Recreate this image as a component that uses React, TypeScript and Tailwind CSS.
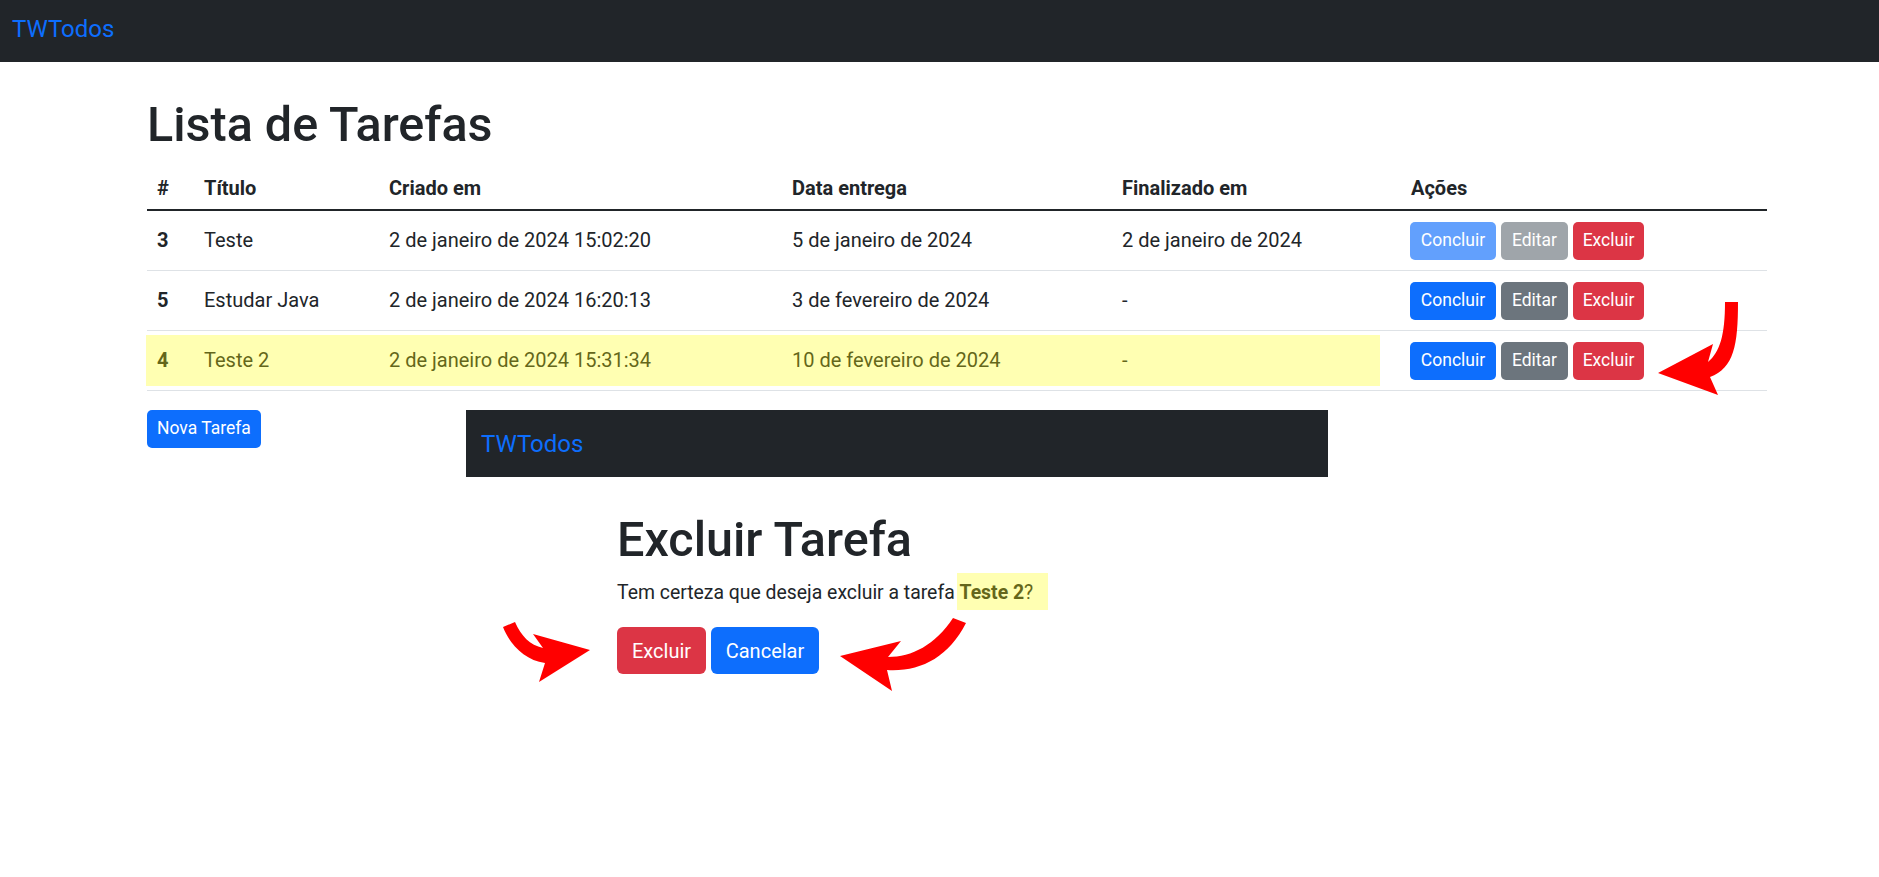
import React from "react";

type Row = {
  id: string;
  title: string;
  created: string;
  due: string;
  finished: string;
  done?: boolean;
  highlight?: boolean;
};

const rows: Row[] = [
  { id: "3", title: "Teste", created: "2 de janeiro de 2024 15:02:20", due: "5 de janeiro de 2024", finished: "2 de janeiro de 2024", done: true },
  { id: "5", title: "Estudar Java", created: "2 de janeiro de 2024 16:20:13", due: "3 de fevereiro de 2024", finished: "-" },
  { id: "4", title: "Teste 2", created: "2 de janeiro de 2024 15:31:34", due: "10 de fevereiro de 2024", finished: "-", highlight: true },
];

const cols = "grid grid-cols-[47px_185px_403px_330px_289px_366px]";

function SmallBtn({ label, color, width }: { label: string; color: string; width: string }) {
  return (
    <button className={`h-[38px] rounded-[5px] text-white text-[17.5px] leading-none flex items-center justify-center ${width} ${color}`}>
      {label}
    </button>
  );
}

export default function App() {
  return (
    <div className="relative w-full h-[877px] bg-white font-[Roboto,sans-serif] text-[#212529] overflow-hidden">
      <nav className="h-[62px] bg-[#212529] pl-[12px] pt-[11px]">
        <span className="text-[24px] leading-[36px] text-[#0d6efd]">TWTodos</span>
      </nav>

      <main className="ml-[147px] w-[1620px]">
        <h1 className="mt-[33px] text-[48.5px] leading-[60px] font-medium">Lista de Tarefas</h1>

        <div className="mt-[8px] text-[20px] leading-[30px]">
          <div className={`${cols} font-bold pt-[10px] pb-[6px] border-b-2 border-[#212529]`}>
            <div className="px-[10px]">#</div>
            <div className="px-[10px]">Título</div>
            <div className="px-[10px]">Criado em</div>
            <div className="px-[10px]">Data entrega</div>
            <div className="px-[10px]">Finalizado em</div>
            <div className="px-[10px]">Ações</div>
          </div>

          {rows.map((r) => (
            <div key={r.id} className={`relative ${cols} h-[60px] items-center border-b border-[#dee2e6]`}>
              <div className="px-[10px] mb-[2px] font-bold">{r.id}</div>
              <div className="px-[10px] mb-[2px]">{r.title}</div>
              <div className="px-[10px] mb-[2px]">{r.created}</div>
              <div className="px-[10px] mb-[2px]">{r.due}</div>
              <div className="px-[10px] mb-[2px]">{r.finished}</div>
              <div className="px-[9px] flex gap-[5px]">
                <SmallBtn label="Concluir" width="w-[86px]" color={r.done ? "bg-[#62a0fd]" : "bg-[#0d6efd]"} />
                <SmallBtn label="Editar" width="w-[67px]" color={r.done ? "bg-[#9fa5aa]" : "bg-[#6c757d]"} />
                <SmallBtn label="Excluir" width="w-[71px]" color="bg-[#dc3545]" />
              </div>
              {r.highlight && (
                <div className="absolute left-[-1px] top-[4px] w-[1234px] h-[51px] bg-[rgba(255,255,0,0.3)] pointer-events-none" />
              )}
            </div>
          ))}
        </div>

        <button className="mt-[19px] h-[38px] px-[10px] rounded-[5px] bg-[#0d6efd] text-white text-[17.5px] leading-none flex items-center">
          Nova Tarefa
        </button>
      </main>

      {/* pasted second screenshot */}
      <div className="absolute left-[466px] top-[410px] w-[862px] h-[300px]">
        <div className="h-[67px] bg-[#212529] pl-[15px] pt-[16px]">
          <span className="text-[24px] leading-[36px] text-[#0d6efd]">TWTodos</span>
        </div>
        <div className="pl-[151px]">
          <h2 className="mt-[33px] text-[48.5px] leading-[60px] font-medium">Excluir Tarefa</h2>
          <p className="mt-[8px] text-[19.4px] leading-[30px]">
            Tem certeza que deseja excluir a tarefa <strong className="font-bold">Teste 2</strong>?
          </p>
          <div className="mt-[19px] flex gap-[5px]">
            <button className="h-[47px] w-[89px] rounded-[6px] bg-[#dc3545] text-white text-[20px] leading-none flex items-center justify-center">
              Excluir
            </button>
            <button className="h-[47px] w-[108px] rounded-[6px] bg-[#0d6efd] text-white text-[20px] leading-none flex items-center justify-center">
              Cancelar
            </button>
          </div>
        </div>
        <div className="absolute left-[491px] top-[163px] w-[91px] h-[37px] bg-[rgba(255,255,0,0.3)] pointer-events-none" />
      </div>

      {/* red annotation arrows */}
      <svg className="absolute left-0 top-0 pointer-events-none" width="1879" height="877" viewBox="0 0 1879 877">
        <path
          fill="#ff0000"
          d="M1725,302 L1738,302 C1738,345 1734,368 1710,377 L1718,395 L1658,373 L1713,344 L1708,362 C1720,352 1725,335 1725,302 Z"
        />
        <path
          fill="#ff0000"
          d="M503,627 L515,622 C521,636 530,645 543,648 L533,634 L590,650 L539,682 L545,663 C525,660 510,645 503,627 Z"
        />
        <path
          fill="#ff0000"
          d="M953,618 L966,623 C948,658 920,672 887,670 L892,691 L840,656 L901,641 L888,657 C912,657 935,645 953,618 Z"
        />
      </svg>
    </div>
  );
}
